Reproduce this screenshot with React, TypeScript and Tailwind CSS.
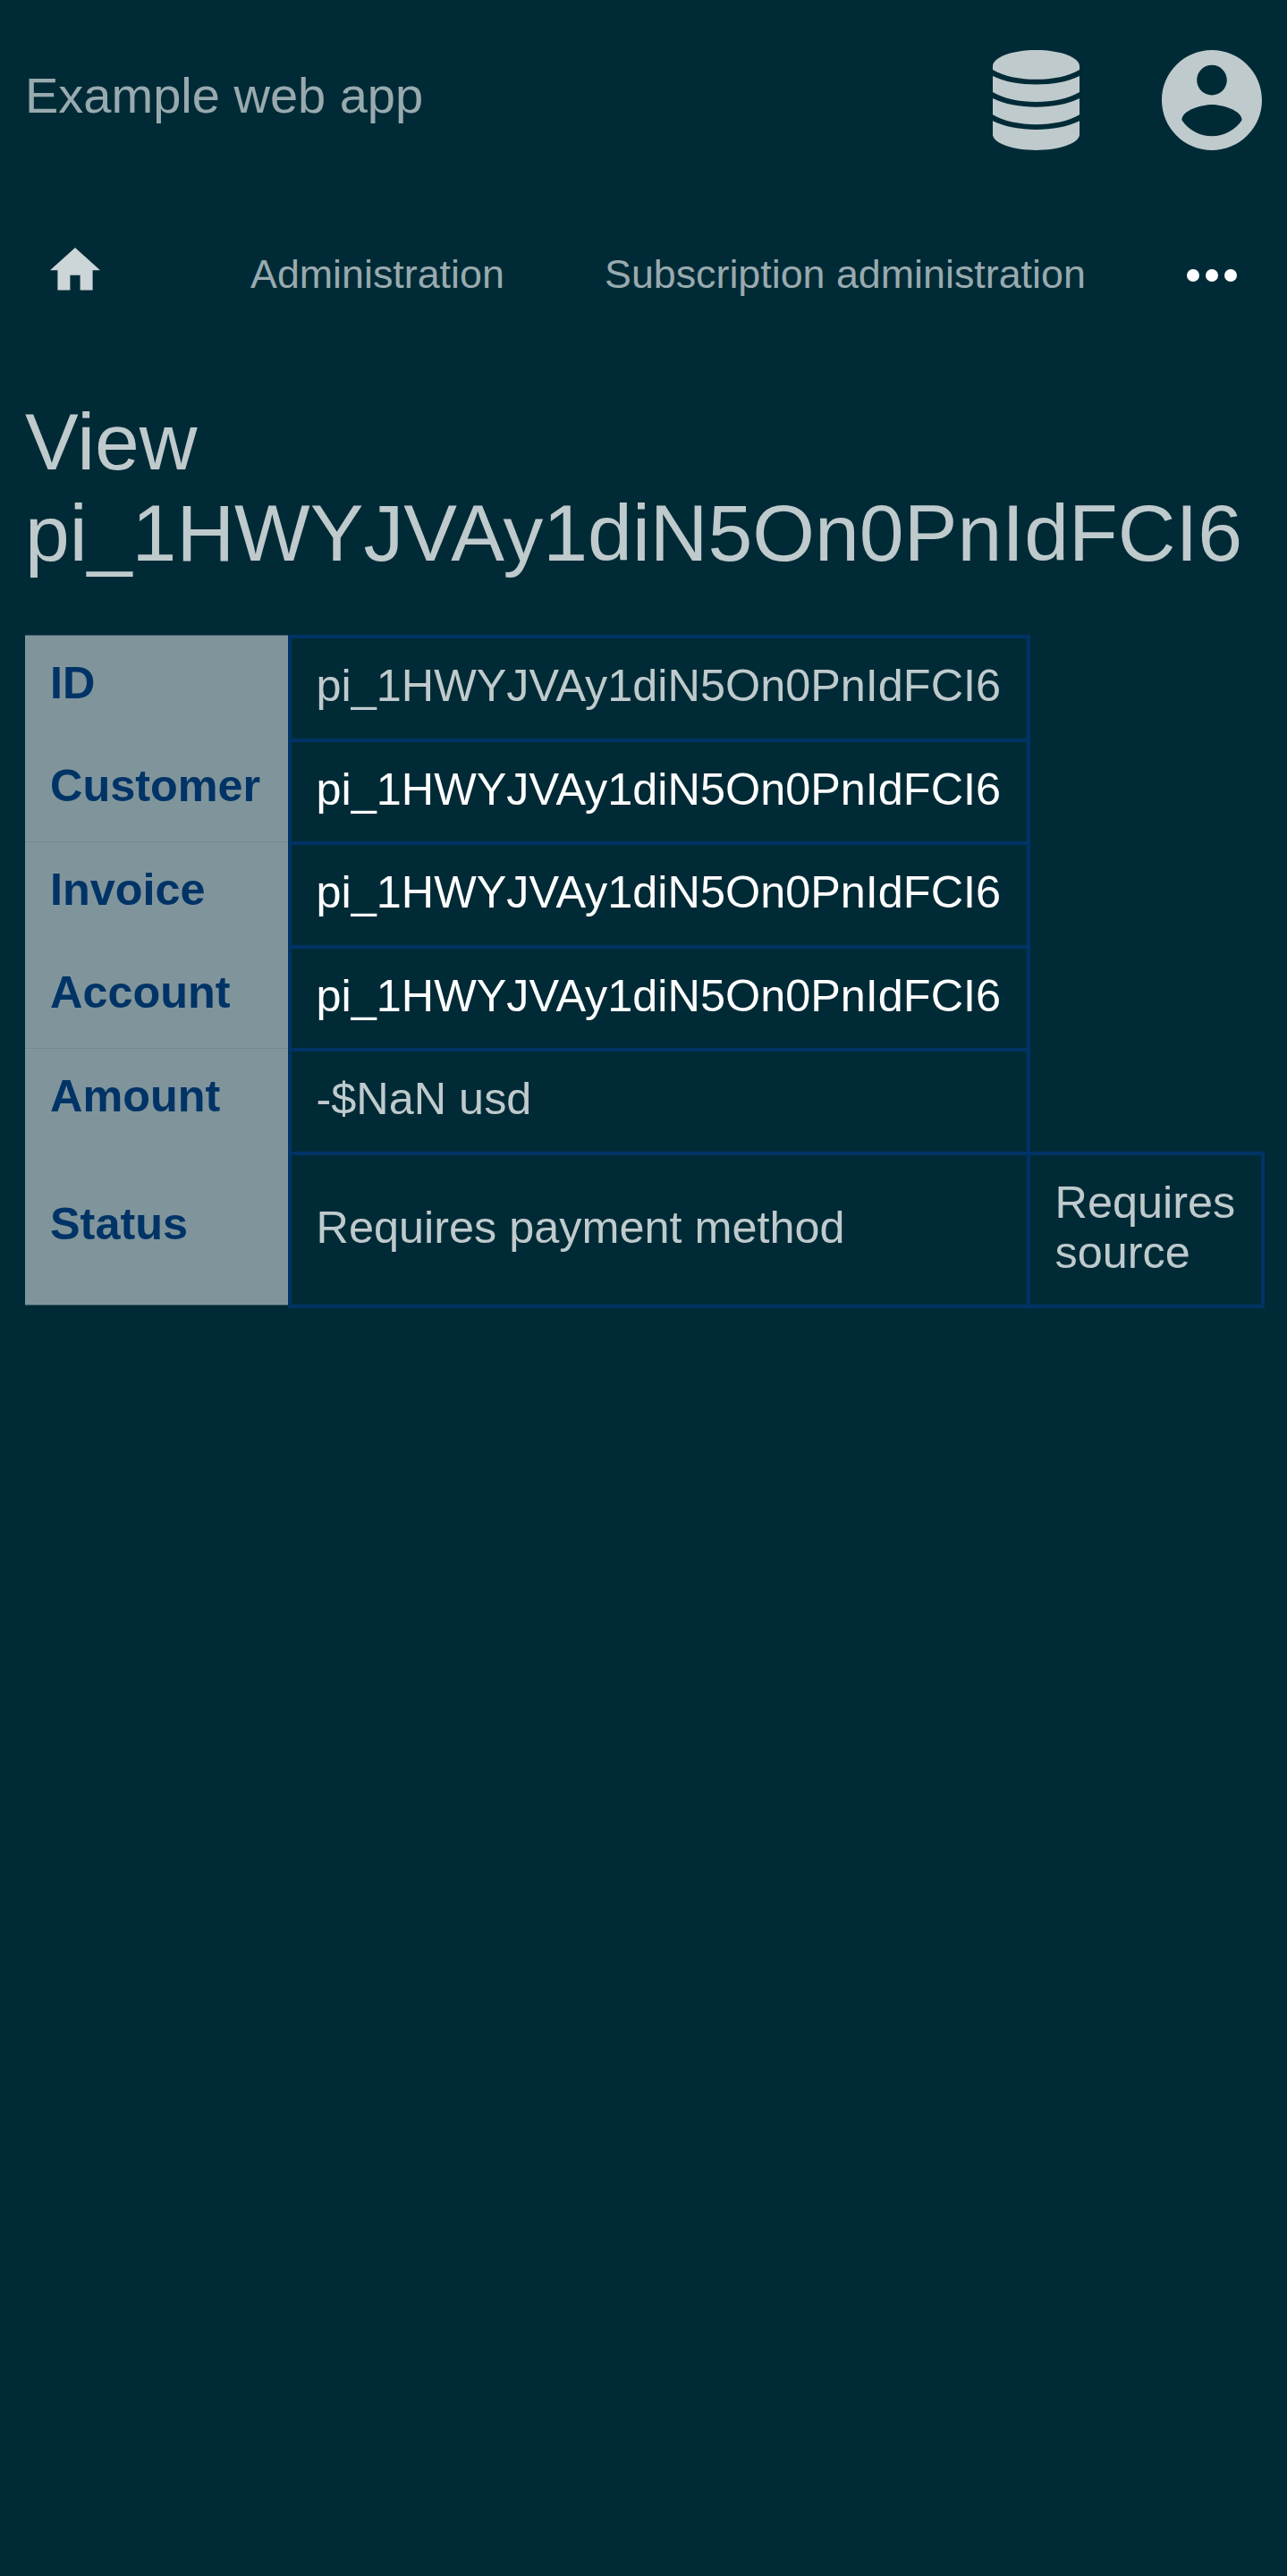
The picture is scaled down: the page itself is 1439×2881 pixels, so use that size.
const rows = [
  { label: 'ID', value: 'pi_1HWYJVAy1diN5On0PnIdFCI6', row: 'h-[116px]', th: 'border-t border-[#40606a]', td: 'text-[#bfcacd]' },
  { label: 'Customer', value: 'pi_1HWYJVAy1diN5On0PnIdFCI6', row: 'h-[115px]', th: '', td: 'text-white' },
  { label: 'Invoice', value: 'pi_1HWYJVAy1diN5On0PnIdFCI6', row: 'h-[116px]', th: 'border-t border-[#728990]', td: 'text-white' },
  { label: 'Account', value: 'pi_1HWYJVAy1diN5On0PnIdFCI6', row: 'h-[115px]', th: '', td: 'text-white' },
  { label: 'Amount', value: '-$NaN usd', row: 'h-[116px]', th: 'border-t border-[#728990]', td: 'text-[#bfcacd]' },
];

function DatabaseIcon() {
  return (
    <svg className="h-[112px] w-[97px] shrink-0" viewBox="0 0 291 336" fill="#bfcacd">
      <path d="M0 54C0 24 65 0 145.500 0S291 24 291 54V66C255 88 200 98.500 145.500 98.500S36 88 0 66Z" />
      <path d="M0 87C40 107 92 115.500 145.500 115.500S251 107 291 87V141C255 163 200 174 145.500 174S36 163 0 141Z" />
      <path d="M0 162C40 182 92 191 145.500 191S251 182 291 162V217C255 239 200 249.500 145.500 249.500S36 239 0 217Z" />
      <path d="M0 238C40 258 92 267 145.500 267S251 258 291 238V286C285 315 220 336 145.500 336S6 315 0 286Z" />
    </svg>
  );
}

function AccountIcon() {
  return (
    <svg className="h-[112px] w-[112px] shrink-0" viewBox="2 2 20 20" fill="#bfcacd">
      <path d="M12 2C6.480 2 2 6.480 2 12s4.480 10 10 10 10-4.480 10-10S17.520 2 12 2zm0 3c1.660 0 3 1.340 3 3s-1.340 3-3 3-3-1.340-3-3 1.340-3 3-3zm0 14.200c-2.500 0-4.710-1.280-6-3.220.03-1.990 4-3.080 6-3.080 1.990 0 5.970 1.090 6 3.080-1.290 1.940-3.500 3.220-6 3.220z" />
    </svg>
  );
}

export default function App() {
  return (
    <div className="h-[2881px] w-[1439px] overflow-hidden bg-[#002b36] font-['Liberation_Sans',Arial,sans-serif]">
      <header className="flex h-[224px] pt-14 pl-7">
        <div className="mt-[19px] w-[1082px] text-[56px] leading-[63px] text-[#99aaaf]">Example web app</div>
        <DatabaseIcon />
        <div className="ml-[92px]">
          <AccountIcon />
        </div>
      </header>
      <nav className="flex h-[218px] pl-14 text-[44.8px] leading-[52px] whitespace-nowrap text-[#99aaaf]">
        <svg className="mt-[53px] h-[47.6px] w-[56px] shrink-0" viewBox="2 3 20 17" fill="#ccd5d7">
          <path d="M10 20v-6h4v6h5v-8h3L12 3 2 12h3v8z" />
        </svg>
        <div className="mt-14 ml-[168px] w-[396px]">Administration</div>
        <div className="mt-14 w-[650.5px]">Subscription administration</div>
        <svg className="mt-[77px] h-[14px] w-[56px] shrink-0" viewBox="0 0 56 14" fill="#fff">
          <circle cx="7" cy="7" r="7" />
          <circle cx="28" cy="7" r="7" />
          <circle cx="49" cy="7" r="7" />
        </svg>
      </nav>
      <main className="pl-7">
        <h1 className="h-[268px] pt-px text-[89.6px] leading-[102px] text-[#bfcacd]">
          View
          <br />
          pi_1HWYJVAy1diN5On0PnIdFCI6
        </h1>
        <div className="text-[50.4px] leading-[57px] whitespace-nowrap">
          {rows.map((r) => (
            <div key={r.label} className={`flex ${r.row}`}>
              <div className={`w-[294px] shrink-0 bg-[#80959b] pt-6 pl-7 font-bold text-[#003366] ${r.th}`}>{r.label}</div>
              <div className={`w-[830px] shrink-0 border-x-4 border-t-4 border-[#003366] pt-6 pl-[27.5px] ${r.td}`}>{r.value}</div>
            </div>
          ))}
          <div className="flex h-[175px]">
            <div className="h-[172px] w-[294px] shrink-0 border-b border-[#40606a] bg-[#80959b] pt-[52px] pl-7 font-bold text-[#003366]">Status</div>
            <div className="w-[826px] shrink-0 border-y-4 border-l-4 border-[#003366] pt-[52px] pl-[27.5px] text-[#bfcacd]">Requires payment method</div>
            <div className="w-[266px] shrink-0 border-4 border-[#003366] pt-6 pl-[27.5px] text-[#bfcacd]">
              <span className="block h-14">Requires </span>
              <span className="block h-14">source</span>
            </div>
          </div>
        </div>
      </main>
    </div>
  );
}
